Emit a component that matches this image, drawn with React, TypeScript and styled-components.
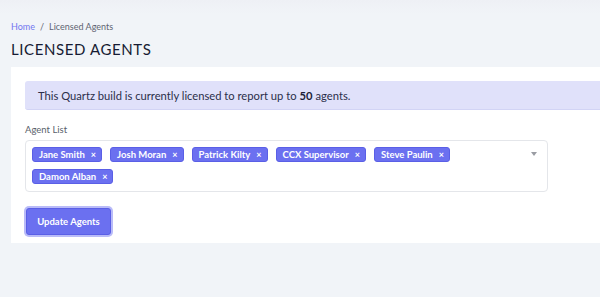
import styled, { createGlobalStyle } from 'styled-components';

const GlobalStyle = createGlobalStyle`
  html, body {
    margin: 0;
    padding: 0;
    background: #f1f4f8;
    overflow: hidden;
  }
  body {
    font-family: Lato, "Noto Sans", sans-serif;
    color: #1a1f36;
  }
`;

const Page = styled.div`
  width: 600px;
  height: 297px;
  padding: 21px 0 0 11px;
  box-sizing: border-box;
  background: linear-gradient(to bottom, #eef0f5 0px, #f1f4f8 14px);
`;

const Breadcrumb = styled.nav`
  display: flex;
  align-items: center;
  gap: 5px;
  font-size: 9px;
  line-height: 12px;
  color: #5f6472;
`;

const Crumb = styled.a`
  color: #7276f0;
  text-decoration: none;
`;

const Title = styled.h1`
  margin: 6px 0 0;
  font-size: 15px;
  font-weight: 400;
  letter-spacing: 0.6px;
  line-height: 20px;
  color: #161b33;
`;

const Card = styled.section`
  margin-top: 8px;
  background: #ffffff;
  padding: 14px 0 6px 14px;
  height: 176px;
  box-sizing: border-box;
`;

const Alert = styled.div`
  height: 29px;
  display: flex;
  align-items: center;
  padding: 0 13px;
  background: #e0e1fa;
  border-bottom: 1px solid #d2d4f5;
  border-radius: 3px 0 0 3px;
  box-sizing: border-box;
  font-size: 11.2px;
  color: #2b2f4a;

  b {
    font-weight: 700;
    color: #1a1d36;
    margin: 0 3px;
  }
`;

const Label = styled.div`
  margin-top: 14px;
  font-size: 9.5px;
  line-height: 12px;
  color: #5a5f6b;
`;

const Select = styled.div`
  margin-top: 4px;
  width: 523px;
  height: 52px;
  box-sizing: border-box;
  border: 1px solid #e4e6ea;
  border-radius: 4px;
  padding: 6px 24px 0 6px;
  position: relative;
  display: flex;
  flex-wrap: wrap;
  align-content: flex-start;
  gap: 7px 8px;
`;

const Tag = styled.span`
  height: 15px;
  display: inline-flex;
  align-items: center;
  gap: 6px;
  padding: 0 5px 0 6px;
  background: #6b70f0;
  border: 1px solid #5a5fe6;
  border-radius: 3px;
  box-sizing: border-box;
  color: #ffffff;
  font-size: 9.5px;
  font-weight: 700;
`;

const Remove = styled.span`
  font-size: 9px;
  line-height: 1;
  font-weight: 700;
`;

const Caret = styled.span`
  position: absolute;
  right: 10px;
  top: 11px;
  width: 0;
  height: 0;
  border-left: 3.5px solid transparent;
  border-right: 3.5px solid transparent;
  border-top: 4px solid #9a9ca3;
`;

const Button = styled.button`
  margin: 16px 0 0 1px;
  width: 85px;
  height: 27px;
  border: 1px solid #5a5fe6;
  border-radius: 3px;
  background: #6b70f0;
  color: #ffffff;
  font-family: inherit;
  font-size: 9.5px;
  font-weight: 700;
  box-shadow: 0 0 0 2px #b9bbf8;
  cursor: pointer;
`;

const agents = ['Jane Smith', 'Josh Moran', 'Patrick Kilty', 'CCX Supervisor', 'Steve Paulin', 'Damon Alban'];

export default function App() {
  return (
    <>
      <GlobalStyle />
      <Page>
        <Breadcrumb>
          <Crumb href="#">Home</Crumb>
          <span>/</span>
          <span>Licensed Agents</span>
        </Breadcrumb>
        <Title>LICENSED AGENTS</Title>
        <Card>
          <Alert>
            This Quartz build is currently licensed to report up to <b>50</b> agents.
          </Alert>
          <Label>Agent List</Label>
          <Select>
            {agents.map((name) => (
              <Tag key={name}>
                {name}
                <Remove>×</Remove>
              </Tag>
            ))}
            <Caret />
          </Select>
          <Button>Update Agents</Button>
        </Card>
      </Page>
    </>
  );
}
